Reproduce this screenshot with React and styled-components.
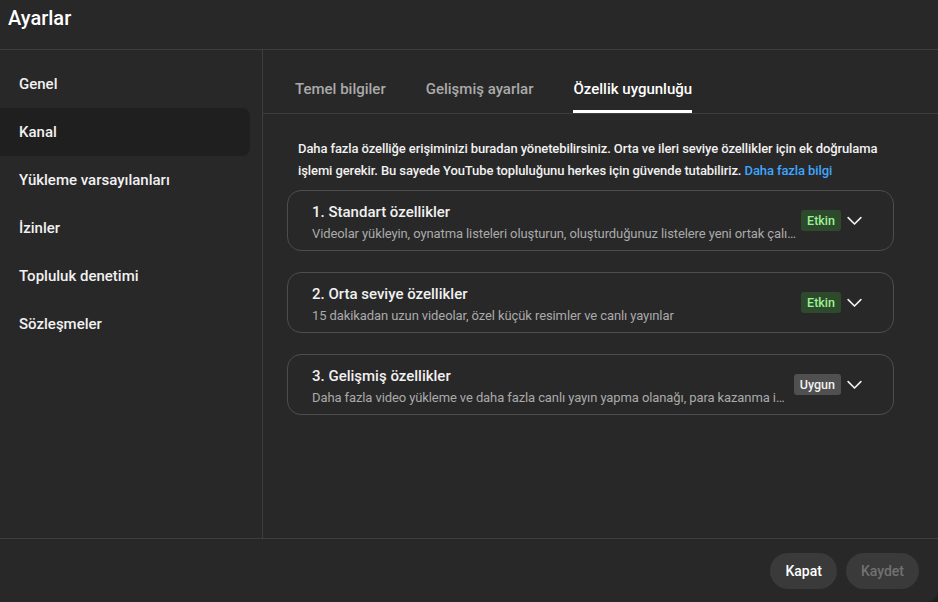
import React from "react";
import styled, { createGlobalStyle } from "styled-components";

const GlobalStyle = createGlobalStyle`
    html, body {
        margin: 0;
        padding: 0;
        background: #1f1f1f;
        font-family: Roboto, "Noto Sans", Arial, sans-serif;
    }
    * {
        box-sizing: border-box;
    }
`;

const Dialog = styled.div`
    width: 938px;
    height: 602px;
    background: #282828;
    color: #f1f1f1;
    display: flex;
    flex-direction: column;
    border-bottom-right-radius: 12px;
    overflow: hidden;
`;

const Header = styled.header`
    height: 50px;
    flex: none;
    padding: 0 8px;
    display: flex;
    align-items: center;
    border-bottom: 1px solid #3e3e3e;

    h1 {
        margin: 0 0 14px;
        font-size: 20px;
        font-weight: 500;
        color: #fff;
    }
`;

const Body = styled.div`
    flex: 1;
    display: flex;
    min-height: 0;
`;

const Sidebar = styled.nav`
    width: 263px;
    flex: none;
    padding-top: 10px;
    border-right: 1px solid #3e3e3e;
    display: flex;
    flex-direction: column;
`;

const SideItem = styled.div`
    width: 250px;
    height: 48px;
    padding-left: 19px;
    display: flex;
    align-items: center;
    font-size: 15px;
    font-weight: 500;
    color: #f1f1f1;
    border-radius: 0 8px 8px 0;
    background: ${props => (props.active ? "#1f1f1f" : "transparent")};
`;

const Main = styled.main`
    flex: 1;
    min-width: 0;
    display: flex;
    flex-direction: column;
`;

const Tabs = styled.div`
    height: 64px;
    flex: none;
    display: flex;
    gap: 40px;
    padding: 0 32px;
    border-bottom: 1px solid #3e3e3e;
`;

const Tab = styled.div`
    display: flex;
    align-items: center;
    padding-top: 18px;
    font-size: 15px;
    font-weight: 500;
    color: ${props => (props.active ? "#fff" : "#aaaaaa")};
    border-bottom: 3px solid ${props => (props.active ? "#fff" : "transparent")};
`;

const Content = styled.div`
    padding: 24px 44px 0 24px;
    display: flex;
    flex-direction: column;
    gap: 21px;
`;

const Intro = styled.p`
    margin: 0 0 -13px;
    padding: 0 0 0 11px;
    font-size: 13px;
    font-weight: 500;
    line-height: 22px;
    letter-spacing: -0.1px;
    color: #f1f1f1;

    a {
        color: #3ea6ff;
        text-decoration: none;
    }
`;

const Card = styled.div`
    height: 61px;
    border: 1px solid #4d4d4d;
    border-radius: 14px;
    padding: 0 30px 0 24px;
    display: flex;
    align-items: center;
`;

const CardText = styled.div`
    flex: 1;
    min-width: 0;
    padding-top: 3px;
    margin-right: 3px;
    display: flex;
    flex-direction: column;
    gap: 3px;
`;

const CardTitle = styled.div`
    font-size: 15px;
    font-weight: 500;
    color: #f1f1f1;
    line-height: 20px;
`;

const CardDesc = styled.div`
    font-size: 13px;
    color: #aaaaaa;
    line-height: 18px;
    letter-spacing: -0.1px;
    white-space: nowrap;
    overflow: hidden;
    text-overflow: ellipsis;
`;

const Badge = styled.span`
    flex: none;
    height: 21px;
    padding: 0 6px;
    margin-top: -1px;
    border-radius: 3px;
    display: inline-flex;
    align-items: center;
    font-size: 12.5px;
    font-weight: 500;
    background: ${props => (props.tone === "on" ? "#2d4b2c" : "#505050")};
    color: ${props => (props.tone === "on" ? "#9cf196" : "#f1f1f1")};
`;

const Chevron = styled.svg`
    flex: none;
    width: 17px;
    height: 17px;
    margin-left: 5px;
`;

const Footer = styled.footer`
    height: 64px;
    flex: none;
    border-top: 1px solid #3e3e3e;
    display: flex;
    justify-content: flex-end;
    align-items: center;
    gap: 9px;
    padding: 0 19px 0 0;
`;

const Button = styled.button`
    height: 36px;
    padding: 0 15px;
    border: 0;
    border-radius: 18px;
    font-family: inherit;
    font-size: 14px;
    font-weight: 500;
    background: #3a3a3a;
    color: ${props => (props.disabled ? "#717171" : "#fff")};
`;

const menu = [
    "Genel",
    "Kanal",
    "Yükleme varsayılanları",
    "İzinler",
    "Topluluk denetimi",
    "Sözleşmeler",
];

const features = [
    {
        title: "1. Standart özellikler",
        desc: "Videolar yükleyin, oynatma listeleri oluşturun, oluşturduğunuz listelere yeni ortak çalışanlar ekleyin ve daha fazlası",
        badge: "Etkin",
        tone: "on",
    },
    {
        title: "2. Orta seviye özellikler",
        desc: "15 dakikadan uzun videolar, özel küçük resimler ve canlı yayınlar",
        badge: "Etkin",
        tone: "on",
    },
    {
        title: "3. Gelişmiş özellikler",
        desc: "Daha fazla video yükleme ve daha fazla canlı yayın yapma olanağı, para kazanma için başvuru ve daha fazlası",
        badge: "Uygun",
        tone: "neutral",
    },
];

const ChevronDown = () => (
    <Chevron viewBox="0 0 24 24" fill="none">
        <path
            d="M3 8l9 9 9-9"
            stroke="#f1f1f1"
            strokeWidth="2.3"
            strokeLinecap="round"
            strokeLinejoin="round"
        />
    </Chevron>
);

export default function App() {
    return (
        <Dialog>
            <GlobalStyle />
            <Header>
                <h1>Ayarlar</h1>
            </Header>
            <Body>
                <Sidebar>
                    {menu.map(item => (
                        <SideItem key={item} active={item === "Kanal"}>
                            {item}
                        </SideItem>
                    ))}
                </Sidebar>
                <Main>
                    <Tabs>
                        <Tab>Temel bilgiler</Tab>
                        <Tab>Gelişmiş ayarlar</Tab>
                        <Tab active>Özellik uygunluğu</Tab>
                    </Tabs>
                    <Content>
                        <Intro>
                            Daha fazla özelliğe erişiminizi buradan yönetebilirsiniz. Orta ve ileri seviye
                            özellikler için ek doğrulama işlemi gerekir. Bu sayede YouTube topluluğunu herkes
                            için güvende tutabiliriz. <a href="#">Daha fazla bilgi</a>
                        </Intro>
                        {features.map(f => (
                            <Card key={f.title}>
                                <CardText>
                                    <CardTitle>{f.title}</CardTitle>
                                    <CardDesc>{f.desc}</CardDesc>
                                </CardText>
                                <Badge tone={f.tone}>{f.badge}</Badge>
                                <ChevronDown />
                            </Card>
                        ))}
                    </Content>
                </Main>
            </Body>
            <Footer>
                <Button>Kapat</Button>
                <Button disabled>Kaydet</Button>
            </Footer>
        </Dialog>
    );
}
